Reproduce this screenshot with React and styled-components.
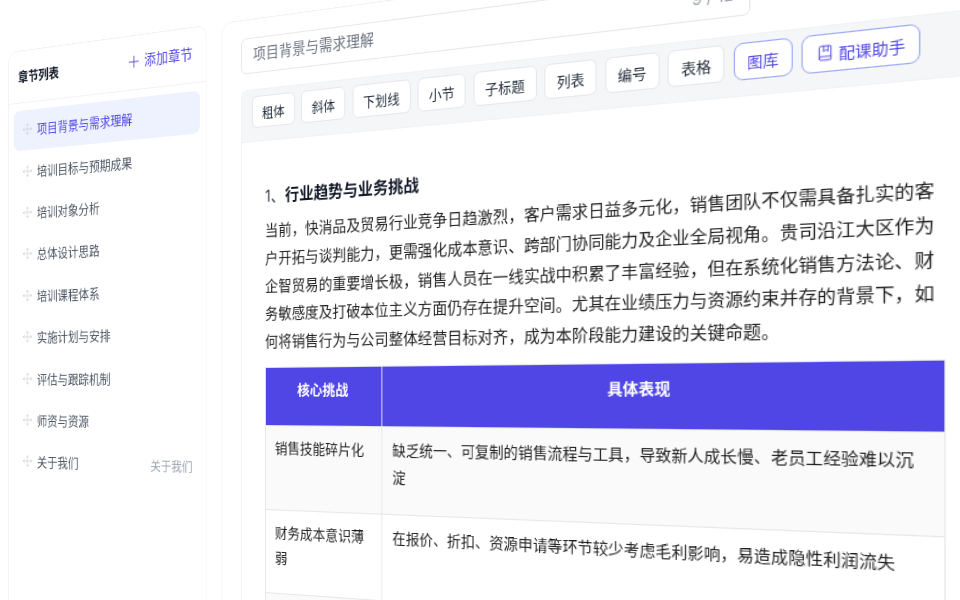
import React from "react";
import styled, { createGlobalStyle } from "styled-components";
import { Plus, Move, BookMarked } from "lucide-react";

const Global = createGlobalStyle`
  html, body {
    margin: 0;
    padding: 0;
    background: #fff;
  }
  body {
    font-family: Inter, "Noto Sans CJK SC", sans-serif;
  }
`;

const Stage = styled.div`
  width: 960px;
  height: 600px;
  overflow: hidden;
  background: #fff;
`;

const Desk = styled.div`
  display: flex;
  align-items: flex-start;
  gap: 17px;
  width: 1060px;
  height: 660px;
  margin: 17px 0 0 -62px;
  transform-origin: 327px 381px;
  transform: perspective(1600px) rotateY(-30deg);
`;

const Sidebar = styled.aside`
  flex: none;
  width: 259px;
  height: 660px;
  box-sizing: border-box;
  border: 1px solid #f1f2f5;
  border-radius: 12px;
  background: #fff;
`;

const SideHeader = styled.div`
  display: flex;
  align-items: center;
  justify-content: space-between;
  height: 57px;
  box-sizing: border-box;
  padding: 0 17px 2px 13px;
  border-bottom: 1px solid #f1f2f5;
`;

const SideTitle = styled.div`
  font-size: 14px;
  font-weight: 600;
  color: #111827;
`;

const AddChapter = styled.div`
  display: flex;
  align-items: center;
  gap: 3px;
  margin-bottom: 3px;
  font-size: 15px;
  color: #4f46e5;

  svg {
    margin-top: 3px;
  }
`;

const ChapterList = styled.div`
  display: flex;
  flex-direction: column;
  gap: 1px;
  padding: 8px 8px 0 7px;
`;

const Chapter = styled.div`
  display: flex;
  align-items: center;
  gap: 6px;
  height: 44.4px;
  padding: 0 9px 2px 12px;
  box-sizing: border-box;
  border-radius: 8px;
  font-size: 14px;
  color: ${(p) => (p.$active ? "#4f46e5" : "#4b5563")};
  background: ${(p) => (p.$active ? "#eef2ff" : "transparent")};
`;

const ChapterName = styled.span`
  flex: 1;
`;

const ChapterNote = styled.span`
  font-size: 13px;
  color: #9ca3af;
  margin-top: 1px;
`;

const Main = styled.main`
  flex: 1;
  height: 660px;
  box-sizing: border-box;
  padding: 18px 24px 0 22px;
  border: 1px solid #f1f2f5;
  border-radius: 12px;
  background: #fff;
`;

const TitleInput = styled.div`
  display: flex;
  align-items: center;
  justify-content: space-between;
  width: 505px;
  height: 36px;
  box-sizing: border-box;
  padding: 0 13px 5px;
  border: 1px solid #e5e7eb;
  border-radius: 6px;
  font-size: 15px;
  color: #6b7280;
`;

const Counter = styled.span`
  margin-top: 2px;
  font-size: 14px;
  color: #9ca3af;
`;

const Editor = styled.div`
  margin-top: 16px;
  border: 1px solid #f1f2f5;
  border-radius: 8px 8px 0 0;
`;

const Toolbar = styled.div`
  display: flex;
  align-items: flex-start;
  gap: 7.7px;
  height: 52px;
  box-sizing: border-box;
  padding: 6px 12px 0;
  background: #f5f6f8;
  border-bottom: 1px solid #f1f2f5;
`;

const ToolButton = styled.div`
  display: flex;
  align-items: center;
  gap: 4px;
  height: 32px;
  box-sizing: border-box;
  padding: 0 10.4px;
  background: #fff;
  border: 1px solid ${(p) => (p.$accent ? "#9aa8f7" : "#e5e7eb")};
  border-radius: ${(p) => (p.$accent ? "8px" : "6px")};
  font-size: 13px;
  white-space: nowrap;
  color: ${(p) => (p.$accent ? "#4f46e5" : "#1f2937")};
`;

const Content = styled.div`
  padding: 42.5px 27px 0;
`;

const Heading = styled.h3`
  margin: 0 0 9.5px;
  font-size: 16.2px;
  line-height: 24px;
  font-weight: 400;
  color: #374151;
`;

const HeadingStrong = styled.strong`
  font-weight: 700;
  color: #111827;
`;

const Para = styled.p`
  width: 631px;
  margin: 0 0 11px;
  font-size: 15.2px;
  line-height: 27.8px;
  color: #1f1f1f;
`;

const Table = styled.table`
  width: 631px;
  table-layout: fixed;
  border-collapse: collapse;
  font-size: 14.15px;
`;

const HeadCell = styled.th`
  width: ${(p) => p.$width || "auto"};
  height: 58px;
  box-sizing: border-box;
  padding: 11px 12px 0;
  vertical-align: top;
  line-height: 22px;
  font-weight: 700;
  text-align: center;
  color: #fff;
  background: #4f46e5;
  border: 1px solid #e5e7eb;
`;

const Row = styled.tr`
  background: ${(p) => (p.$shade ? "#fafafb" : "#fff")};
`;

const Cell = styled.td`
  height: 83.7px;
  box-sizing: border-box;
  padding: 9.25px 17px 0 10.5px;
  vertical-align: top;
  line-height: 25.5px;
  color: #1f1f1f;
  border: 1px solid #e5e7eb;
`;

const chapters = [
  "项目背景与需求理解",
  "培训目标与预期成果",
  "培训对象分析",
  "总体设计思路",
  "培训课程体系",
  "实施计划与安排",
  "评估与跟踪机制",
  "师资与资源",
  "关于我们",
];

const tools = ["粗体", "斜体", "下划线", "小节", "子标题", "列表", "编号", "表格"];

export default function App() {
  return (
    <Stage>
      <Global />
      <Desk>
        <Sidebar>
          <SideHeader>
            <SideTitle>章节列表</SideTitle>
            <AddChapter>
              <Plus size={20} strokeWidth={1.2} />
              添加章节
            </AddChapter>
          </SideHeader>
          <ChapterList>
            {chapters.map((name, i) => (
              <Chapter key={name} $active={i === 0}>
                <Move size={14} strokeWidth={1.25} color="#c6cad2" />
                <ChapterName>{name}</ChapterName>
                {name === "关于我们" && <ChapterNote>关于我们</ChapterNote>}
              </Chapter>
            ))}
          </ChapterList>
        </Sidebar>
        <Main>
          <TitleInput>
            项目背景与需求理解
            <Counter>9 / 12</Counter>
          </TitleInput>
          <Editor>
            <Toolbar>
              {tools.map((t) => (
                <ToolButton key={t}>{t}</ToolButton>
              ))}
              <ToolButton $accent>图库</ToolButton>
              <ToolButton $accent>
                <BookMarked size={14} strokeWidth={1.5} />
                配课助手
              </ToolButton>
            </Toolbar>
            <Content>
              <Heading>
                1、<HeadingStrong>行业趋势与业务挑战</HeadingStrong>
              </Heading>
              <Para>
                当前，快消品及贸易行业竞争日趋激烈，客户需求日益多元化，销售团队不仅需具备扎实的客户开拓与谈判能力，更需强化成本意识、跨部门协同能力及企业全局视角。贵司沿江大区作为企智贸易的重要增长极，销售人员在一线实战中积累了丰富经验，但在系统化销售方法论、财务敏感度及打破本位主义方面仍存在提升空间。尤其在业绩压力与资源约束并存的背景下，如何将销售行为与公司整体经营目标对齐，成为本阶段能力建设的关键命题。
              </Para>
              <Table>
                <thead>
                  <tr>
                    <HeadCell $width="129px">核心挑战</HeadCell>
                    <HeadCell>具体表现</HeadCell>
                  </tr>
                </thead>
                <tbody>
                  <Row $shade>
                    <Cell>销售技能碎片化</Cell>
                    <Cell>缺乏统一、可复制的销售流程与工具，导致新人成长慢、老员工经验难以沉淀</Cell>
                  </Row>
                  <Row>
                    <Cell>财务成本意识薄弱</Cell>
                    <Cell>在报价、折扣、资源申请等环节较少考虑毛利影响，易造成隐性利润流失</Cell>
                  </Row>
                  <Row $shade>
                    <Cell />
                    <Cell />
                  </Row>
                </tbody>
              </Table>
            </Content>
          </Editor>
        </Main>
      </Desk>
    </Stage>
  );
}
